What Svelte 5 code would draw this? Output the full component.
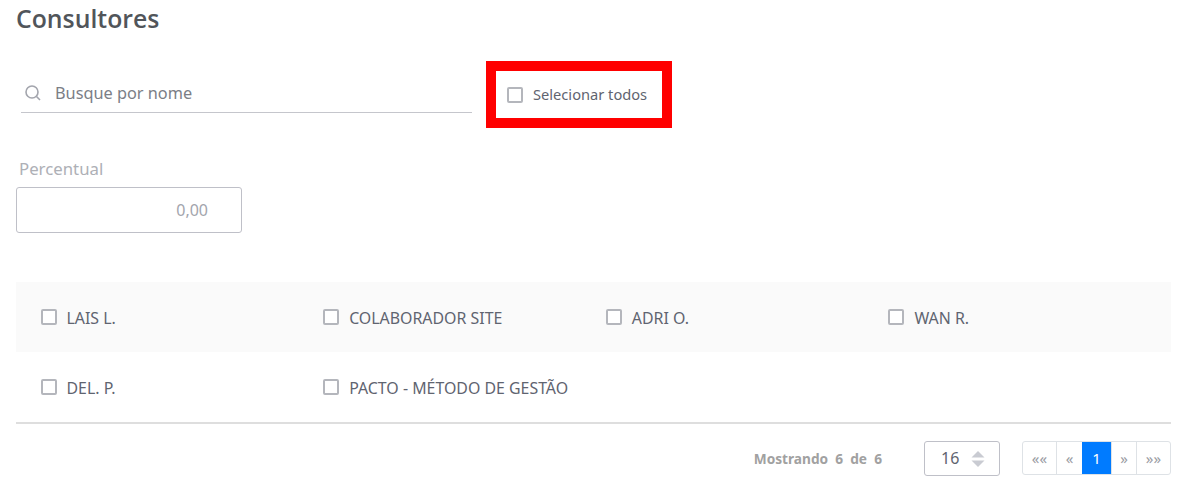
<script>
	const rows = [
		['LAIS L.', 'COLABORADOR SITE', 'ADRI O.', 'WAN R.'],
		['DEL. P.', 'PACTO - MÉTODO DE GESTÃO']
	];
	const pages = ['««', '«', '1', '»', '»»'];
</script>

<div class="page">
	<h1>Consultores</h1>

	<div class="filters">
		<div class="search">
			<svg width="18" height="18" viewBox="0 0 18 18" fill="none" stroke="#a3a5ad" stroke-width="1.6">
				<circle cx="8" cy="8" r="6" />
				<path d="M12.5 12.5 16 16" />
			</svg>
			<span>Busque por nome</span>
		</div>
		<div class="highlight">
			<span class="check"></span>
			<span class="all">Selecionar todos</span>
		</div>
	</div>

	<div class="percent">
		<div class="label">Percentual</div>
		<div class="input">0,00</div>
	</div>

	<div class="list">
		{#each rows as row, r}
			<div class="row" class:odd={r === 0}>
				{#each row as name}
					<div class="item">
						<span class="check"></span>
						<span class="name">{name}</span>
					</div>
				{/each}
			</div>
		{/each}
	</div>

	<div class="footer">
		<span class="count">Mostrando&nbsp; 6&nbsp; de&nbsp; 6</span>
		<div class="size">
			<span>16</span>
			<svg width="14" height="16" viewBox="0 0 14 16" fill="#c9cbd2">
				<path d="M7 0 13.5 6.500H.5z" />
				<path d="M7 16 13.500 9.500H.5z" />
			</svg>
		</div>
		<div class="pager">
			{#each pages as p}
				<span class="pg" class:active={p === '1'}>{p}</span>
			{/each}
		</div>
	</div>
</div>

<style>
	:global(body) {
		background: #fff;
	}

	.page {
		height: 493px;
		overflow: hidden;
		padding: 0 20px 0 16px;
		box-sizing: border-box;
		font-family: 'Noto Sans', sans-serif;
	}

	h1 {
		margin: 0;
		height: 61px;
		padding-top: 2px;
		box-sizing: border-box;
		font-family: 'Open Sans', sans-serif;
		font-size: 24.800px;
		line-height: 32px;
		font-weight: 600;
		color: #51555a;
	}

	.filters {
		display: flex;
		align-items: flex-start;
		height: 67px;
	}

	.search {
		display: flex;
		align-items: center;
		gap: 13px;
		width: 451px;
		height: 52px;
		margin-left: 5px;
		padding: 12px 0 0 3px;
		box-sizing: border-box;
		border-bottom: 1px solid #c5c6cc;
	}

	.search span {
		font-size: 16.300px;
		color: #7b7e86;
	}

	.highlight {
		display: flex;
		align-items: center;
		gap: 10px;
		width: 186px;
		height: 67px;
		margin-left: 14px;
		padding-left: 11px;
		box-sizing: border-box;
		border: 10px solid #ff0000;
	}

	.all {
		padding-bottom: 2px;
		font-size: 14.650px;
		color: #5f6470;
	}

	.check {
		flex: none;
		width: 16px;
		height: 16px;
		box-sizing: border-box;
		border: 2px solid #b4b6bc;
		border-radius: 2px;
		background: #fff;
	}

	.percent {
		margin-top: 30px;
	}

	.label {
		margin-left: 3px;
		font-size: 16.800px;
		line-height: 22px;
		color: #aeb0b6;
	}

	.input {
		width: 226px;
		height: 46px;
		margin-top: 7px;
		padding-right: 33px;
		box-sizing: border-box;
		border: 1px solid #bfc0c8;
		border-radius: 3px;
		font-size: 16px;
		line-height: 44px;
		text-align: right;
		color: #a3a5ad;
	}

	.list {
		width: 1155px;
		margin-top: 49px;
		border-bottom: 2px solid #dedede;
	}

	.row {
		display: grid;
		grid-template-columns: repeat(4, 1fr);
		align-items: center;
		height: 70px;
		padding-left: 24.500px;
	}

	.row.odd {
		background: #fafafa;
	}

	.item {
		display: flex;
		align-items: center;
		gap: 10px;
	}

	.name {
		padding-top: 2px;
		font-size: 15.900px;
		color: #5f6470;
	}

	.footer {
		display: flex;
		align-items: center;
		justify-content: flex-end;
		width: 1155px;
		margin-top: 17px;
	}

	.count {
		font-size: 13.700px;
		font-weight: 700;
		color: #a1a1a1;
	}

	.size {
		display: flex;
		align-items: center;
		justify-content: space-between;
		width: 76px;
		height: 35px;
		margin-left: 42px;
		padding: 0 14px 0 16px;
		box-sizing: border-box;
		border: 1px solid #bfc0c8;
		border-radius: 3px;
		font-size: 16px;
		color: #5f6470;
	}

	.size span {
		padding-bottom: 2px;
	}

	.pager {
		display: flex;
		align-self: flex-start;
		height: 34px;
		margin-left: 22px;
		border: 1px solid #dee2e6;
		border-radius: 3px;
		box-sizing: border-box;
	}

	.pg {
		display: flex;
		align-items: center;
		justify-content: center;
		width: 33px;
		box-sizing: border-box;
		border-left: 1px solid #dee2e6;
		font-size: 15px;
		color: #9a9ca3;
	}

	.pg:nth-child(2) {
		width: 26px;
	}

	.pg:nth-child(4) {
		width: 25px;
	}

	.pg:first-child {
		border-left: 0;
	}

	.pg:last-child {
		width: 34px;
	}

	.pg.active {
		width: 29px;
		border-left: 0;
		background: #007bff;
		color: #fff;
		font-size: 15px;
	}
</style>
